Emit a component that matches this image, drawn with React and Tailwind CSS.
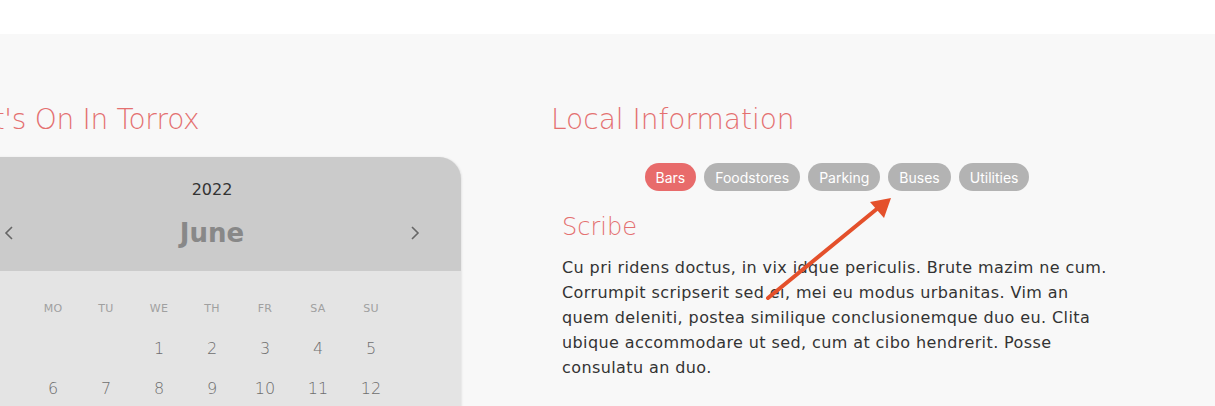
import React from 'react';

const days = ['MO', 'TU', 'WE', 'TH', 'FR', 'SA', 'SU'];
const rows = [
  ['', '', '1', '2', '3', '4', '5'],
  ['6', '7', '8', '9', '10', '11', '12'],
  ['13', '14', '15', '16', '17', '18', '19'],
];
const tabs = ['Bars', 'Foodstores', 'Parking', 'Buses', 'Utilities'];

function Calendar() {
  return (
    <div className="w-[498px] rounded-tr-[22px] overflow-hidden bg-[#e4e4e4] shadow-[1px_0_2px_rgba(0,0,0,0.08)]">
      <div className="h-[114px] bg-[#cbcbcb] flex flex-col items-center pt-[21px]">
        <div className="text-[16px] leading-[24px] text-[#333]">2022</div>
        <div className="mt-[13px] w-full flex items-center justify-between px-[40px]">
          <svg width="12" height="18" viewBox="0 0 12 18" className="text-[#666]">
            <path d="M9 3 L3 9 L9 15" fill="none" stroke="currentColor" strokeWidth="1.6" />
          </svg>
          <span className="text-[26px] leading-[36px] font-bold text-[#888]">June</span>
          <svg width="12" height="18" viewBox="0 0 12 18" className="text-[#666]">
            <path d="M3 3 L9 9 L3 15" fill="none" stroke="currentColor" strokeWidth="1.6" />
          </svg>
        </div>
      </div>
      <div className="flex justify-center pt-[29px]">
        <div className="grid grid-cols-7 w-[371px]">
          {days.map((d) => (
            <div key={d} className="text-center text-[11px] leading-[18px] text-[#a0a0a0] tracking-wide">{d}</div>
          ))}
          {rows.flat().map((n, i) => (
            <div key={i} className={`text-center text-[16px] leading-[40px] font-light text-[#6e6e6e] ${i < 7 ? 'mt-[11px]' : ''}`}>{n}</div>
          ))}
        </div>
      </div>
    </div>
  );
}

export default function App() {
  return (
    <div className="relative w-[1215px] h-[406px] overflow-hidden bg-white" style={{ fontFamily: '"DejaVu Sans", sans-serif' }}>
      <div className="h-[34px] bg-white" />
      <div className="h-[372px] bg-[#f8f8f8] flex pt-[69px]">
        <div className="ml-[-37px] w-[498px] shrink-0">
          <h2 className="ml-[-31px] text-[28px] leading-[34px] font-light tracking-[-0.3px] text-[#e47070] whitespace-nowrap">What's On In Torrox</h2>
          <div className="mt-[20px]">
            <Calendar />
          </div>
        </div>
        <div className="ml-[90px] w-[572px] shrink-0">
          <h2 className="text-[28px] leading-[34px] font-light text-[#e47070] whitespace-nowrap">Local Information</h2>
          <div className="mt-[26px] flex justify-center gap-[8px]" style={{ fontFamily: 'Inter, sans-serif' }}>
            {tabs.map((t, i) => (
              <span key={t} className={`h-[28px] px-[11px] rounded-full flex items-center text-[14px] text-white ${i === 0 ? 'bg-[#e86b6b]' : 'bg-[#b3b3b3]'}`}>{t}</span>
            ))}
          </div>
          <div className="pl-[11px]">
            <h3 className="mt-[21px] text-[24px] leading-[30px] font-light text-[#e47070]">Scribe</h3>
            <p className="mt-[13px] text-[16px] leading-[25px] tracking-[0.4px] text-[#333] w-[552px]">
              Cu pri ridens doctus, in vix idque periculis. Brute mazim ne cum. Corrumpit scripserit sed ei, mei eu modus urbanitas. Vim an quem deleniti, postea similique conclusionemque duo eu. Clita ubique accommodare ut sed, cum at cibo hendrerit. Posse consulatu an duo.
            </p>
          </div>
        </div>
      </div>
      <svg className="absolute left-0 top-0 pointer-events-none" width="1215" height="406">
        <line x1="768" y1="298" x2="878" y2="208" stroke="#e4502b" strokeWidth="4" strokeLinecap="round" />
        <polygon points="891,198 870,202 884,218" fill="#e4502b" />
      </svg>
    </div>
  );
}
